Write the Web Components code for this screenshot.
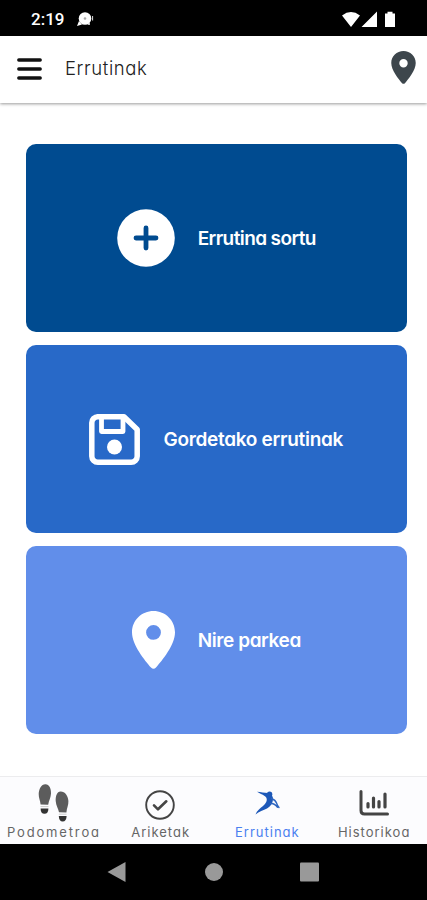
<!DOCTYPE html>
<html lang="eu">
<head>
<meta charset="utf-8">
<meta name="viewport" content="width=device-width, initial-scale=1">
<title>Errutinak</title>
<style>
  html, body { margin: 0; height: 100%; }
  body {
    background: #fff;
    font-family: Inter, "Liberation Sans", sans-serif;
    font-feature-settings: "cv11";
  }
</style>
</head>
<body>
<routine-app></routine-app>

<script>
const ICONS = {
  menu: '<svg viewBox="0 0 25 22"><path d="M1.800 2h21.400M1.800 11h21.400M1.800 20h21.400" stroke="#111" stroke-width="3.400" stroke-linecap="round"/></svg>',
  pin: '<svg viewBox="0 0 43 58"><path fill="currentColor" fill-rule="evenodd" d="M21.500 0C9.600 0 0 9.400 0 21.200C0 34 13 49.500 19 56.500Q21.500 59 24 56.500C30 49.500 43 34 43 21.200C43 9.400 33.400 0 21.500 0ZM21.500 14a7.400 7.400 0 1 1 0 14.800a7.400 7.400 0 1 1 0-14.800Z"/></svg>',
  plus: '<svg viewBox="0 0 58 58"><circle cx="29" cy="29" r="28.800" fill="#fff"/><path d="M29 19v20M19 29h20" stroke="#004b90" stroke-width="4.800" stroke-linecap="round"/></svg>',
  save: '<svg viewBox="0 0 51 51" fill="none" stroke="#fff" stroke-width="5.500" stroke-linejoin="round"><path d="M8.500 2.800H35L48.200 15.500V42.200a6 6 0 0 1-6 6H8.800a6 6 0 0 1-6-6V8.800a6 6 0 0 1 6-6Z"/><path d="M12.500 3v14.500H34V3" stroke-width="4.800"/><circle cx="25.500" cy="33" r="7.500" fill="#fff" stroke="none"/></svg>',
  feet: '<svg viewBox="0 0 31 38"><g fill="#5c5c5c"><path d="M7.500 .2C11.300 .4 13.200 4.500 13 9.500C12.800 14 10.800 16.500 10.200 20.800L2.600 20.500C2.300 16.500 .6 14 .7 10C.8 5 3.500 0 7.500 .2Z"/><path d="M22.500 7.500C26.800 7.300 30 11.500 30.400 17C30.600 21.500 28.700 24 28.400 28.500L21 28.300C20.300 24.500 18 21.500 17.700 17C17.500 12 19 7.700 22.500 7.500Z"/></g><path fill="#333" d="M2.600 24.500h7.800c0 3.500-1.300 5.300-3.900 5.300S2.600 28 2.600 24.500ZM20.800 32h7.800c0 3.500-1.400 5.500-3.900 5.500s-3.900-2-3.900-5.500Z"/><path d="M2.500 22.600h8M20.800 30.200h7.700" stroke="#ccc"/></svg>',
  check: '<svg viewBox="0 0 30 30" fill="none" stroke="#444"><circle cx="15" cy="15" r="13.800" stroke-width="1.900"/><path d="M9 15.300l4 4 8.300-8" stroke-width="2.600" stroke-linecap="round" stroke-linejoin="round"/></svg>',
  runner: '<svg viewBox="0 0 26 24"><g fill="#1d58b8"><circle cx="15.600" cy="3.300" r="2.700"/><path d="M3 .8C7 1.200 10 1.800 14 2C17.500 3 19.300 5.500 19 8.500C18.700 12.500 16.500 15.500 13 17.500C9.500 19.300 5 20.500 1.500 23.500C3 19.500 6 17.500 9 15C12 12.500 13.500 9.500 12.500 7C10.500 3.800 6.500 3.300 3 .8Z"/></g><path d="M17.500 7.500Q21.500 9 22.500 12T25 16.500M16.500 12.500Q20.500 12 23.500 16.300" fill="none" stroke="#2d65c0" stroke-width="1.400" stroke-linecap="round"/></svg>',
  chart: '<svg viewBox="0 0 30 26" fill="none" stroke="#444" stroke-linecap="round"><path d="M2 1.500V20.500Q2 24 5.500 24H28.500" stroke-width="3"/><path d="M9 13.500v3.500M14.500 8v9M20 11.500v5.500M26 4v13" stroke-width="3.200"/></svg>'
};

class AppIcon extends HTMLElement {
  constructor() {
    super();
    this.attachShadow({mode: 'open'});
    this.shadowRoot.innerHTML = `
      <style>
        :host { display: block; flex: none; }
        svg { display: block; width: 100%; height: 100%; }
      </style>
      ${ICONS[this.getAttribute('name')] || ''}
    `;
  }
}

class StatusBar extends HTMLElement {
  constructor() {
    super();
    this.attachShadow({mode: 'open'});
    this.shadowRoot.innerHTML = `
      <style>
        :host {
          display: flex;
          align-items: center;
          box-sizing: border-box;
          height: 36px;
          padding: 2px 32px 0 31px;
          background: #000;
          color: #fff;
          font: 500 17px Roboto, sans-serif;
        }
        .notice { width: 17px; height: 15px; margin-left: 13px; }
        .system { width: 54px; height: 17px; margin-left: auto; }
      </style>
      <span>2:19</span>
      <svg class="notice" viewBox="0 0 17 15"><circle cx="8" cy="6.500" r="6.300" fill="#fff"/><path d="M2 9L0 14l5-1.500Z" fill="#fff"/><circle cx="8" cy="6.500" r="1.300" fill="#aaa"/><path d="M15.600 4v4.500" stroke="#ddd"/><circle cx="12" cy="12" r="1" fill="#fff"/></svg>
      <svg class="system" viewBox="0 0 54 17" fill="#fff"><path d="M1 4.500Q10-2.300 19 4.500L10 16ZM20.500 16L36 .5V16ZM44 2.500h2.500V.8h5V2.500h2.500V16H44Z"/></svg>
    `;
  }
}

class AppHeader extends HTMLElement {
  constructor() {
    super();
    this.attachShadow({mode: 'open'});
    this.shadowRoot.innerHTML = `
      <style>
        :host {
          display: flex;
          align-items: center;
          box-sizing: border-box;
          height: 67px;
          padding: 0 11px 4px 17px;
          background: #fff;
          box-shadow: 0 1px 3px rgba(0, 0, 0, .4);
        }
        .menu { width: 25px; height: 22px; margin-top: 3px; }
        .pin { width: 25px; height: 33px; margin-left: auto; color: #3d464c; }
        h1 { margin: 0 0 0 23px; font-size: 18.500px; font-weight: 300; color: #222; letter-spacing: .6px; }
      </style>
      <app-icon class="menu" name="menu"></app-icon>
      <h1><slot></slot></h1>
      <app-icon class="pin" name="pin"></app-icon>
    `;
  }
}

class RoutineCard extends HTMLElement {
  constructor() {
    super();
    this.attachShadow({mode: 'open'});
    this.shadowRoot.innerHTML = `
      <style>
        :host {
          display: flex;
          align-items: center;
          justify-content: center;
          gap: 23px;
          border-radius: 10px;
          color: #fff;
          font-size: 19px;
          font-weight: 600;
          letter-spacing: var(--label-spacing, 0);
          white-space: nowrap;
        }
      </style>
      <slot name="icon"></slot>
      <span><slot></slot></span>
    `;
  }
}

class TabItem extends HTMLElement {
  constructor() {
    super();
    this.attachShadow({mode: 'open'});
    this.shadowRoot.innerHTML = `
      <style>
        :host {
          display: flex;
          flex-direction: column;
          align-items: center;
          color: #666;
          font-size: 13px;
          line-height: 16px;
          letter-spacing: var(--label-spacing, 1px);
          white-space: nowrap;
        }
        :host([active]) { color: #4a7ff0; }
        .icon { display: grid; place-items: center; height: 40px; margin: 6px 0 1px; }
        .label { padding-left: 1px; }
      </style>
      <div class="icon"><slot name="icon"></slot></div>
      <span class="label"><slot></slot></span>
    `;
  }
}

class TabBar extends HTMLElement {
  constructor() {
    super();
    this.attachShadow({mode: 'open'});
    this.shadowRoot.innerHTML = `
      <style>
        :host {
          display: grid;
          grid-template-columns: repeat(4, 1fr);
          box-sizing: border-box;
          height: 68px;
          border-top: 1px solid #ececee;
          background: #fcfcfe;
        }
      </style>
      <slot></slot>
    `;
  }
}

class SystemNav extends HTMLElement {
  constructor() {
    super();
    this.attachShadow({mode: 'open'});
    this.shadowRoot.innerHTML = `
      <style>
        :host {
          display: flex;
          align-items: center;
          justify-content: space-between;
          box-sizing: border-box;
          height: 56px;
          padding: 0 108px 0 107px;
          background: #000;
        }
        svg { display: block; height: 20px; }
      </style>
      <svg width="19" viewBox="0 0 19 20"><path d="M18.500 0V20L.5 10Z" fill="#999"/></svg>
      <svg width="19" viewBox="0 0 19 20"><circle cx="10" cy="10" r="9" fill="#999"/></svg>
      <svg width="19" viewBox="0 0 19 20"><rect y=".5" width="19" height="19" rx="1" fill="#999"/></svg>
    `;
  }
}

class RoutineApp extends HTMLElement {
  constructor() {
    super();
    this.attachShadow({mode: 'open'});
    this.shadowRoot.innerHTML = `
      <style>
        :host { display: flex; flex-direction: column; height: 900px; }
        main {
          flex: 1;
          display: grid;
          grid-template-rows: repeat(3, 1fr);
          gap: 13px;
          padding: 41px 20px 42px 25.500px;
        }
        .create { background: #004b90; --label-spacing: -.6px; }
        .saved { background: #2869c8; --label-spacing: -.3px; }
        .park { background: #618eea; --label-spacing: -.4px; }
        .create app-icon { width: 58px; height: 58px; }
        .saved app-icon { width: 51px; height: 51px; }
        .park app-icon { width: 43px; height: 58px; }
        .steps { --label-spacing: 1.850px; }
        .feet { width: 31px; height: 38px; }
        .check { width: 30px; height: 30px; margin-top: 4px; }
        .runner { width: 26px; height: 24px; }
        .chart { width: 30px; height: 26px; }
      </style>
      <status-bar></status-bar>
      <app-header>Errutinak</app-header>
      <main>
        <routine-card class="create"><app-icon slot="icon" name="plus"></app-icon>Errutina sortu</routine-card>
        <routine-card class="saved"><app-icon slot="icon" name="save"></app-icon>Gordetako errutinak</routine-card>
        <routine-card class="park"><app-icon slot="icon" name="pin"></app-icon>Nire parkea</routine-card>
      </main>
      <tab-bar>
        <tab-item class="steps"><app-icon slot="icon" class="feet" name="feet"></app-icon>Podometroa</tab-item>
        <tab-item><app-icon slot="icon" class="check" name="check"></app-icon>Ariketak</tab-item>
        <tab-item active><app-icon slot="icon" class="runner" name="runner"></app-icon>Errutinak</tab-item>
        <tab-item><app-icon slot="icon" class="chart" name="chart"></app-icon>Historikoa</tab-item>
      </tab-bar>
      <system-nav></system-nav>
    `;
  }
}

window.customElements.define('app-icon', AppIcon);
window.customElements.define('status-bar', StatusBar);
window.customElements.define('app-header', AppHeader);
window.customElements.define('routine-card', RoutineCard);
window.customElements.define('tab-item', TabItem);
window.customElements.define('tab-bar', TabBar);
window.customElements.define('system-nav', SystemNav);
window.customElements.define('routine-app', RoutineApp);
</script>
</body>
</html>
